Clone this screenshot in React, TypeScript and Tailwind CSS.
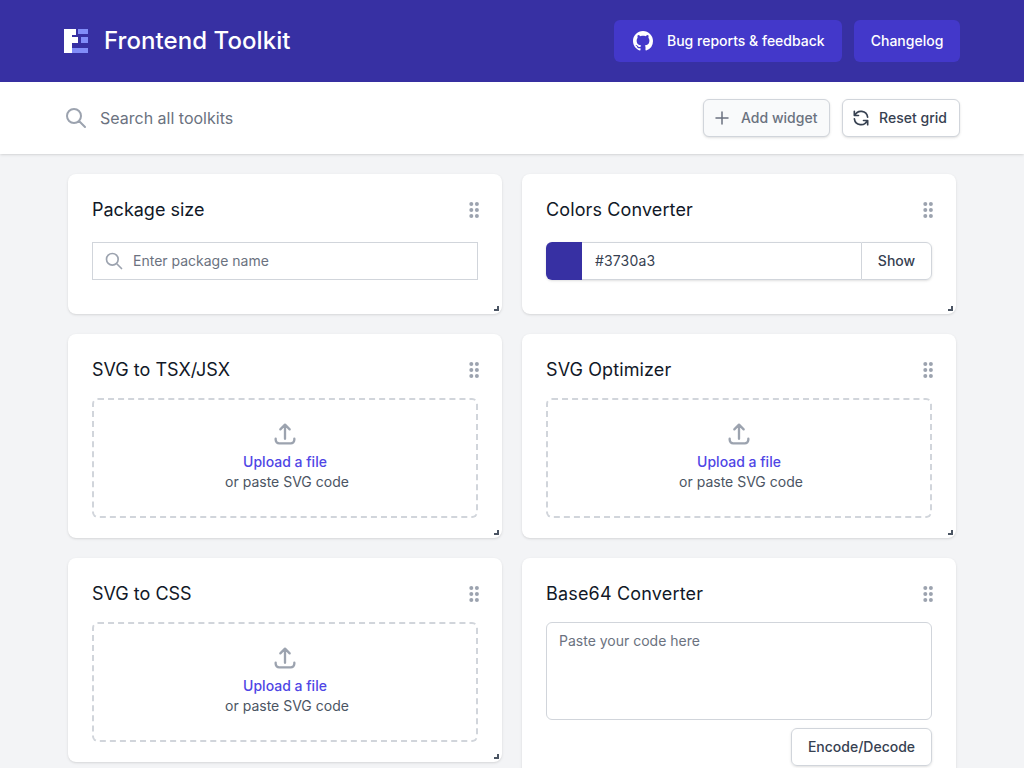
import type { ReactNode } from "react";

function Grip() {
  return (
    <svg width="12" height="18" viewBox="0 0 12 18" className="text-[#9ca3af] -mr-[2px]" fill="currentColor">
      <circle cx="3.3" cy="3" r="2" /><circle cx="8.9" cy="3" r="2" />
      <circle cx="3.3" cy="9" r="2" /><circle cx="8.9" cy="9" r="2" />
      <circle cx="3.3" cy="15" r="2" /><circle cx="8.9" cy="15" r="2" />
    </svg>
  );
}

function SearchIcon({ size, className }: { size: number; className: string }) {
  return (
    <svg width={size} height={size} viewBox="0 0 24 24" fill="none" stroke="currentColor" strokeWidth="2" strokeLinecap="round" strokeLinejoin="round" className={className}>
      <path d="M21 21l-6-6m2-5a7 7 0 11-14 0 7 7 0 0114 0z" />
    </svg>
  );
}

function Card({ title, h, tracking, children }: { title: string; h: string; tracking?: string; children: ReactNode }) {
  return (
    <div className={`relative bg-white rounded-lg shadow px-6 pt-6 ${h}`}>
      <div className="flex items-center justify-between h-6">
        <h2 className={`text-lg leading-6 font-normal text-[#111827] ${tracking ?? ""}`}>{title}</h2>
        <Grip />
      </div>
      {children}
      <span className="absolute right-[3px] bottom-[3px] w-[5px] h-[5px] border-r-2 border-b-2 border-[#4b5563]" />
    </div>
  );
}

function Drop() {
  return (
    <div className="mt-4 h-[120px] border-2 border-dashed border-[#d1d5db] rounded-md flex flex-col items-center justify-center">
      <svg width="28" height="28" viewBox="0 0 24 24" fill="none" stroke="currentColor" strokeWidth="2" strokeLinecap="round" strokeLinejoin="round" className="text-[#9ca3af] -mt-[4px] mb-[4px]">
        <path d="M4 16v1a3 3 0 003 3h10a3 3 0 003-3v-1m-4-8l-4-4m0 0L8 8m4-4v12" />
      </svg>
      <span className="text-sm leading-5 text-[#4f46e5] font-[450]">Upload a file</span>
      <span className="text-sm leading-5 text-[#4b5563] pl-[4px]">or paste SVG code</span>
    </div>
  );
}

export default function App() {
  return (
    <div className="h-screen overflow-hidden bg-[#f3f4f6] font-['Inter',sans-serif]">
      <header className="h-[82px] bg-[#3730a3] px-16 flex items-center justify-between">
        <div className="flex items-center gap-4">
          <svg width="24" height="24" viewBox="0 0 24 24">
            <path fill="#fff" d="M0 0h12v6H8v2h6v6H8v10H0z" />
            <path fill="#818cf8" d="M14 0h10v5H14zM17 8h7v6h-7zM8 19h16v5H8z" />
          </svg>
          <span className="text-2xl leading-8 font-medium text-white tracking-[0.07px]">Frontend Toolkit</span>
        </div>
        <div className="flex items-center gap-3">
          <button className="h-[42px] w-[228px] pl-[19px] rounded-md bg-[#4338ca] text-white text-sm font-medium flex items-center gap-[14px]">
            <svg width="20" height="20" viewBox="0 0 16 16" fill="currentColor">
              <path d="M8 0C3.58 0 0 3.58 0 8c0 3.54 2.29 6.53 5.47 7.59.4.07.55-.17.55-.38 0-.19-.01-.82-.01-1.49-2.01.37-2.53-.49-2.69-.94-.09-.23-.48-.94-.82-1.13-.28-.15-.68-.52-.01-.53.63-.01 1.08.58 1.23.82.72 1.21 1.87.87 2.33.66.07-.52.28-.87.51-1.07-1.78-.2-3.64-.89-3.64-3.95 0-.87.31-1.59.82-2.15-.08-.2-.36-1.02.08-2.12 0 0 .67-.21 2.2.82.64-.18 1.32-.27 2-.27.68 0 1.36.09 2 .27 1.53-1.04 2.2-.82 2.2-.82.44 1.1.16 1.92.08 2.12.51.56.82 1.27.82 2.15 0 3.07-1.87 3.75-3.65 3.95.29.25.54.73.54 1.48 0 1.07-.01 1.93-.01 2.2 0 .21.15.46.55.38A8.013 8.013 0 0016 8c0-4.42-3.58-8-8-8z" />
            </svg>
            Bug reports &amp; feedback
          </button>
          <button className="h-[42px] w-[106px] rounded-md bg-[#4338ca] text-white text-sm font-medium">Changelog</button>
        </div>
      </header>

      <div className="relative h-[72px] bg-white shadow px-16 flex items-center justify-between">
        <div className="flex items-center gap-3 text-[#6b7280]">
          <SearchIcon size={24} className="text-[#9ca3af]" />
          <span className="text-base">Search all toolkits</span>
        </div>
        <div className="flex items-center gap-3">
          <button className="h-[38px] w-[127px] pl-[9px] rounded-md border border-[#d1d5db] bg-[#f9fafb] shadow-sm text-sm font-[450] tracking-[0.02px] text-[#6b7280] flex items-center gap-[10px]">
            <svg width="18" height="18" viewBox="0 0 24 24" fill="none" stroke="currentColor" strokeWidth="2" strokeLinecap="round" strokeLinejoin="round">
              <path d="M12 4v16m8-8H4" />
            </svg>
            Add widget
          </button>
          <button className="h-[38px] w-[118px] pl-2 rounded-md border border-[#d1d5db] bg-white shadow-sm text-sm font-[450] tracking-[0.02px] text-[#374151] flex items-center gap-2">
            <svg width="20" height="20" viewBox="0 0 24 24" fill="none" stroke="currentColor" strokeWidth="2" strokeLinecap="round" strokeLinejoin="round">
              <path d="M4 4v5h.582m15.356 2A8.001 8.001 0 004.582 9m0 0H9m11 11v-5h-.581m0 0a8.003 8.003 0 01-15.357-2m15.357 2H15" />
            </svg>
            Reset grid
          </button>
        </div>
      </div>

      <main className="mx-[68px] mt-5 grid grid-cols-2 gap-5">
        <Card title="Package size" h="h-[140px]">
          <div className="mt-5 h-[38px] border border-[#d1d5db] flex items-center pl-[11px] gap-[9px] text-sm text-[#6b7280]">
            <SearchIcon size={20} className="text-[#9ca3af]" />
            <span>Enter package name</span>
          </div>
        </Card>
        <Card title="Colors Converter" h="h-[140px]" tracking="tracking-[0.12px]">
          <div className="mt-5 h-[38px] flex rounded-md shadow-sm text-sm">
            <div className="w-9 bg-[#3730a3] rounded-l-md" />
            <div className="flex-1 border-y border-[#d1d5db] flex items-center pl-[13px] text-[#374151] tracking-[0.14px]">#3730a3</div>
            <div className="w-[71px] border border-[#d1d5db] rounded-r-md flex items-center justify-center text-[#374151] font-[450]">Show</div>
          </div>
        </Card>
        <Card title="SVG to TSX/JSX" h="h-[204px]"><Drop /></Card>
        <Card title="SVG Optimizer" h="h-[204px]" tracking="tracking-[0.1px]"><Drop /></Card>
        <Card title="SVG to CSS" h="h-[204px]"><Drop /></Card>
        <Card title="Base64 Converter" h="h-[260px]" tracking="tracking-[0.18px]">
          <div className="mt-4 h-[98px] border border-[#d1d5db] rounded-md px-3 py-2 text-sm text-[#6b7280]">Paste your code here</div>
          <div className="mt-2 flex justify-end">
            <button className="h-[38px] w-[141px] rounded-md border border-[#d1d5db] shadow-sm text-sm font-[450] text-[#374151]">Encode/Decode</button>
          </div>
        </Card>
      </main>
    </div>
  );
}
